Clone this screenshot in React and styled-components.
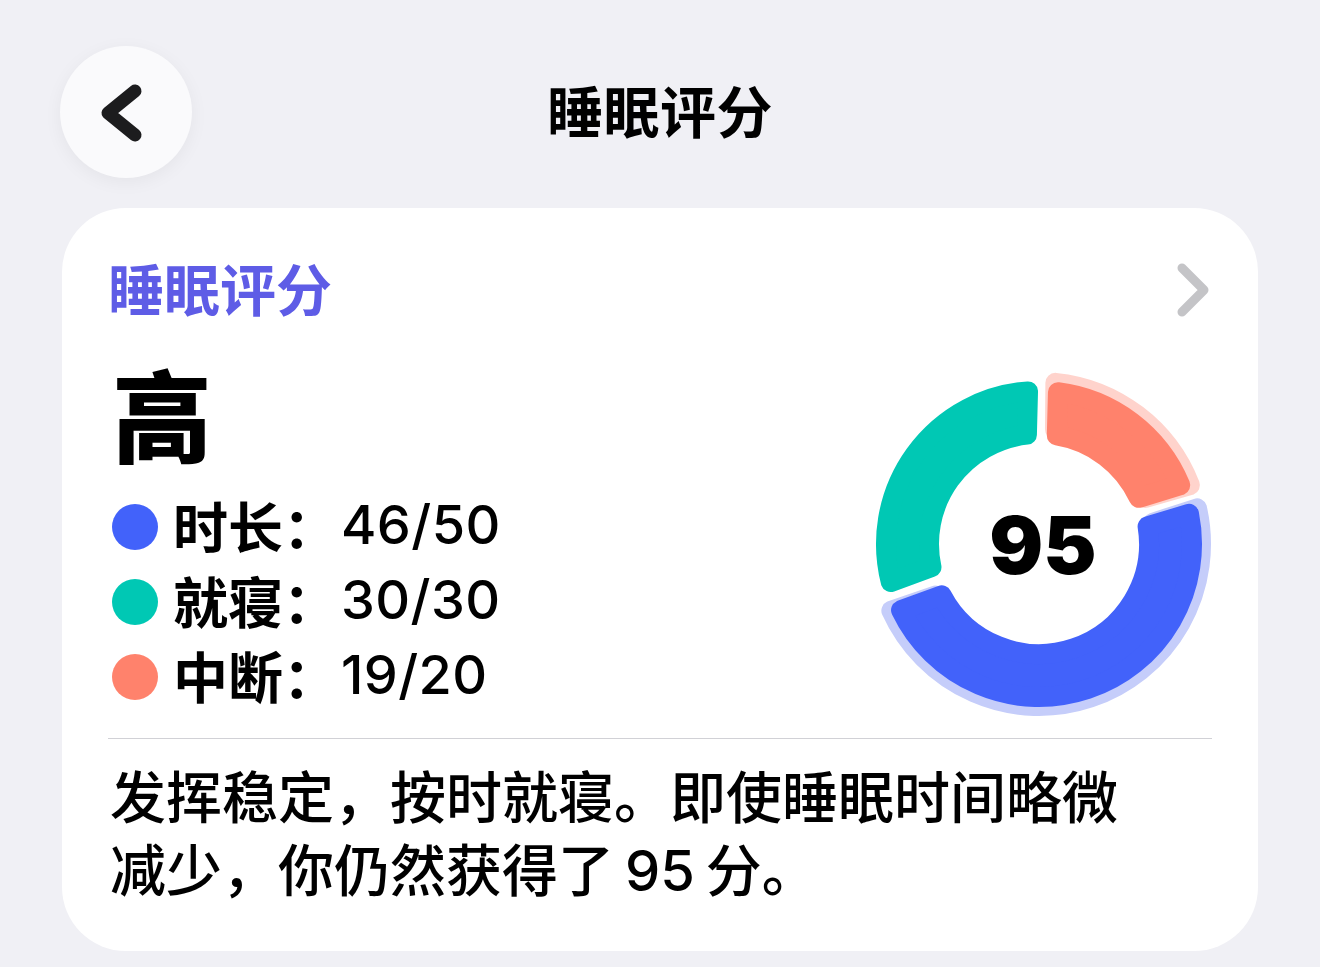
import React from 'react';
import styled, { createGlobalStyle } from 'styled-components';

const GlobalStyle = createGlobalStyle`
  html, body {
    margin: 0;
    padding: 0;
    background: #f0f0f5;
  }
  body {
    font-family: "Inter", "Noto Sans CJK SC", sans-serif;
    color: #000;
    -webkit-font-smoothing: antialiased;
  }
`;

const Page = styled.div`
  width: 1320px;
  min-height: 967px;
  background: #f0f0f5;
`;

const Header = styled.header`
  display: grid;
  grid-template-columns: 1fr auto 1fr;
  align-items: center;
  padding: 46px 60px 0 60px;
  margin-bottom: 30px;
`;

const BackButton = styled.button`
  width: 132px;
  height: 132px;
  border-radius: 50%;
  border: none;
  padding: 0;
  background: #fafafc;
  box-shadow: 0 4px 18px rgba(0, 0, 0, 0.05);
  display: flex;
  align-items: center;
  justify-content: center;
  justify-self: start;
  cursor: pointer;
`;

const PageTitle = styled.h1`
  margin: 0;
  padding-bottom: 6px;
  font-family: "Noto Sans CJK SC", sans-serif;
  font-size: 56px;
  font-weight: 700;
  line-height: 1.2;
  letter-spacing: 0.5px;
  color: #000;
`;

const Card = styled.section`
  margin: 0 62px;
  background: #fff;
  border-radius: 64px;
  padding: 46px 48px 43px 48px;
`;

const CardHead = styled.div`
  display: flex;
  align-items: center;
  justify-content: space-between;
`;

const CardTitle = styled.h2`
  margin: 0;
  font-family: "Noto Sans CJK SC", sans-serif;
  font-size: 56px;
  font-weight: 700;
  line-height: 66px;
  color: #5e5ce6;
  margin-left: -2px;
`;

const Chevron = styled.svg`
  display: block;
  margin-top: 4px;
`;

const Main = styled.div`
  display: flex;
  justify-content: space-between;
  align-items: flex-start;
  margin-top: 42px;
`;

const Summary = styled.div`
  display: flex;
  flex-direction: column;
`;

const Grade = styled.div`
  font-family: "Noto Sans CJK SC", sans-serif;
  font-size: 100px;
  font-weight: 900;
  line-height: 100px;
  margin-left: 2px;
  margin-bottom: 25px;
`;

const Row = styled.div`
  display: flex;
  align-items: center;
  height: 75px;
`;

const Dot = styled.span`
  width: 46px;
  height: 46px;
  border-radius: 50%;
  background: ${p => p.color};
  margin: 4px 15px 0 2px;
  flex-shrink: 0;
`;

const Label = styled.span`
  font-family: "Noto Sans CJK SC", sans-serif;
  font-size: 55px;
  font-weight: 700;
  line-height: 75px;
`;

const Value = styled.span`
  font-family: "Inter", sans-serif;
  font-size: 54px;
  font-weight: 500;
  line-height: 75px;
  margin-left: 3px;
  letter-spacing: 0.4px;
`;

const Donut = styled.svg`
  display: block;
  margin-top: 7px;
  margin-right: -4px;
`;

const Divider = styled.hr`
  border: none;
  height: 1px;
  background: #d1d1d6;
  margin: 19px -2px 23px -2px;
`;

const Description = styled.p`
  margin: 0;
  max-width: 1040px;
  font-family: "Inter", "Noto Sans CJK SC", sans-serif;
  font-size: 56px;
  font-weight: 500;
  line-height: 73px;
  word-spacing: -4px;
  color: #000;
`;

const scores = [
  { key: 'duration', label: '时长：', value: '46/50', color: '#4262fa', halo: '#c5cdfa', from: 73, to: 250 },
  { key: 'bedtime', label: '就寝：', value: '30/30', color: '#00c8b4', halo: null, from: 250, to: 361.5 },
  { key: 'interrupt', label: '中断：', value: '19/20', color: '#ff826c', halo: '#ffd3cc', from: 1.5, to: 73 },
];

const CX = 175;
const CY = 175;
const R_IN = 100;
const R_OUT = 163;
const GAP = 10;
const ROUND = 10;

function pt(r, deg) {
  const a = (deg - 90) * Math.PI / 180;
  return [CX + r * Math.cos(a), CY + r * Math.sin(a)];
}

// annular sector with parallel gaps, inset so a round stroke restores the size
function segmentPath(from, to, rIn, rOut) {
  const ri = rIn + ROUND;
  const ro = rOut - ROUND;
  const off = GAP / 2 + ROUND;
  const dOut = off / ro * 180 / Math.PI;
  const dIn = off / ri * 180 / Math.PI;
  const [x1, y1] = pt(ro, from + dOut);
  const [x2, y2] = pt(ro, to - dOut);
  const [x3, y3] = pt(ri, to - dIn);
  const [x4, y4] = pt(ri, from + dIn);
  const largeOut = to - from - 2 * dOut > 180 ? 1 : 0;
  const largeIn = to - from - 2 * dIn > 180 ? 1 : 0;
  return `M${x1} ${y1} A${ro} ${ro} 0 ${largeOut} 1 ${x2} ${y2} L${x3} ${y3} A${ri} ${ri} 0 ${largeIn} 0 ${x4} ${y4} Z`;
}

function ScoreRing({ total }) {
  return (
    <Donut width="350" height="350" viewBox="0 0 350 350">
      {scores.filter(s => s.halo).map(s => (
        <path
          key={s.key + '-halo'}
          d={segmentPath(s.from - 1, s.to + 1, R_IN + 6, R_OUT + 9)}
          fill={s.halo}
          stroke={s.halo}
          strokeWidth={ROUND * 2}
          strokeLinejoin="round"
        />
      ))}
      {scores.map(s => (
        <path
          key={s.key}
          d={segmentPath(s.from, s.to, R_IN, R_OUT)}
          fill={s.color}
          stroke={s.color}
          strokeWidth={ROUND * 2}
          strokeLinejoin="round"
        />
      ))}
      <text
        x={CX + 4}
        y={CY + 30}
        textAnchor="middle"
        fontFamily="Inter, sans-serif"
        fontWeight="900"
        fontSize="80"
        fill="#000"
      >
        {total}
      </text>
    </Donut>
  );
}

export default function App() {
  return (
    <Page>
      <GlobalStyle />
      <Header>
        <BackButton aria-label="返回">
          <svg width="60" height="80" viewBox="0 0 60 80">
            <path d="M39 19 L12 41 L39 63" fill="none" stroke="#1c1c1e" strokeWidth="13" strokeLinecap="round" strokeLinejoin="round" />
          </svg>
        </BackButton>
        <PageTitle>睡眠评分</PageTitle>
        <div />
      </Header>

      <Card>
        <CardHead>
          <CardTitle>睡眠评分</CardTitle>
          <Chevron width="40" height="60" viewBox="0 0 40 60">
            <path d="M12 9 L34 31 L12 53" fill="none" stroke="#c4c4c7" strokeWidth="9" strokeLinecap="round" strokeLinejoin="round" />
          </Chevron>
        </CardHead>

        <Main>
          <Summary>
            <Grade>高</Grade>
            {scores.map(s => (
              <Row key={s.key}>
                <Dot color={s.color} />
                <Label>{s.label}</Label>
                <Value>{s.value}</Value>
              </Row>
            ))}
          </Summary>
          <ScoreRing total={95} />
        </Main>

        <Divider />

        <Description>
          发挥稳定，按时就寝。即使睡眠时间略微减少，你仍然获得了 95 分。
        </Description>
      </Card>
    </Page>
  );
}
